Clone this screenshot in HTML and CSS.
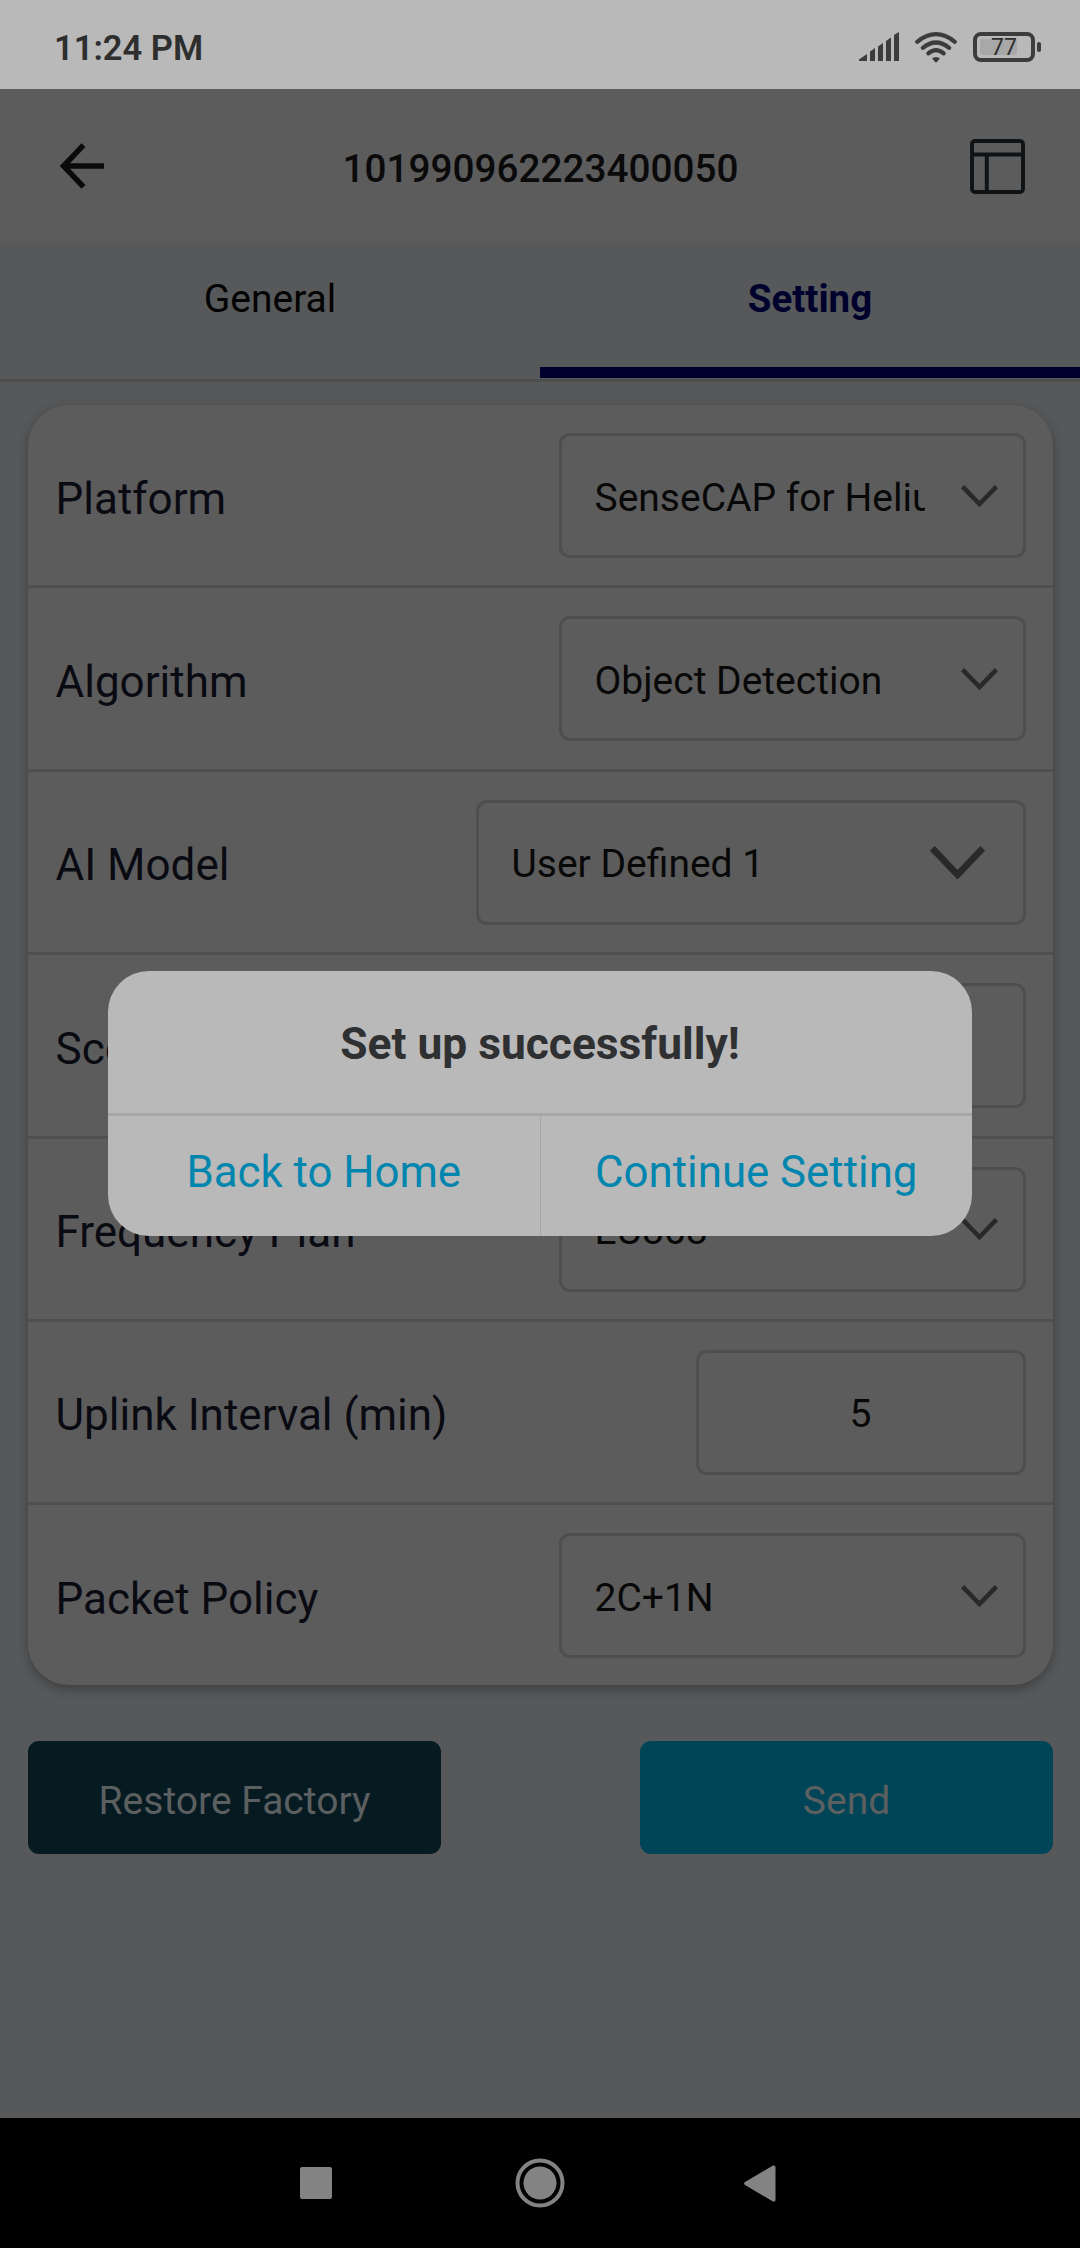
FILE: index.html
```html
<!DOCTYPE html>
<html lang="en">
<head>
<meta charset="utf-8">
<title>Device settings</title>
<link rel="stylesheet" href="styles.css">
</head>
<body>
<div class="screen">
  <div class="status-bar">
    <span class="clock">11:24 PM</span>
    <div class="status-icons">
      <svg class="signal" width="40" height="30" viewBox="0 0 40 30"><path d="M0 29V27.500L8 22V29ZM11 29V19.500L16 16V29ZM19 29V14.500L24 11V29ZM27 29V9L32 5.500V29ZM35 29V3L40 0V29Z"/></svg>
      <svg class="wifi" width="42" height="31" viewBox="0 0 42 31"><g fill="none" stroke-width="4.200" stroke-linecap="round"><path d="M2.200 9.800Q21 -5.400 39.800 9.800"/><path d="M7.800 15.800Q21 5.200 34.200 15.800"/><path d="M13.300 21.400Q21 15 28.700 21.400"/></g><path class="dot" d="M17 26.500Q21 23.300 25 26.500L22 30Q21 30.800 20 30Z"/></svg>
      <div class="battery"><span class="battery-case"><span class="battery-level">77</span></span><span class="battery-nub"></span></div>
    </div>
  </div>
  <header class="app-header">
    <svg width="44" height="46" viewBox="0 0 44 46"><path d="M23.500 2.200L3.500 23L23.500 43.800M4 23H44" fill="none" stroke="#0a0a0a" stroke-width="5.500"/></svg>
    <h1>101990962223400050</h1>
    <svg width="55" height="55" viewBox="0 0 55 55"><g fill="none" stroke="#0f1315" stroke-width="3.900"><rect x="2" y="2" width="51" height="51" rx="3"/><path d="M2 15.500H53M16.800 15.500V53"/></g></svg>
  </header>
  <nav class="tabs">
    <span class="tab">General</span>
    <span class="tab active">Setting</span>
  </nav>
  <main>
    <section class="card">
      <div class="row"><label>Platform</label><div class="field"><span class="value">SenseCAP for Helium</span><svg class="chevron" width="37" height="22" viewBox="0 0 37 22"><path d="M1.600 1.600L18.500 19L35.400 1.600"/></svg></div></div>
      <div class="row"><label>Algorithm</label><div class="field"><span class="value">Object Detection</span><svg class="chevron" width="37" height="22" viewBox="0 0 37 22"><path d="M1.600 1.600L18.500 19L35.400 1.600"/></svg></div></div>
      <div class="row"><label>AI Model</label><div class="field wide"><span class="value">User Defined 1</span><svg class="chevron large" width="55" height="33" viewBox="0 0 55 33"><path d="M2.300 2.300L27.500 28.800L52.700 2.300"/></svg></div></div>
      <div class="row"><label>Score Threshold</label><div class="field number"></div></div>
      <div class="row"><label>Frequency Plan</label><div class="field"><span class="value">EU868</span><svg class="chevron" width="37" height="22" viewBox="0 0 37 22"><path d="M1.600 1.600L18.500 19L35.400 1.600"/></svg></div></div>
      <div class="row"><label>Uplink Interval (min)</label><div class="field number"><span>5</span></div></div>
      <div class="row"><label>Packet Policy</label><div class="field"><span class="value">2C+1N</span><svg class="chevron" width="37" height="22" viewBox="0 0 37 22"><path d="M1.600 1.600L18.500 19L35.400 1.600"/></svg></div></div>
    </section>
    <div class="actions">
      <button class="restore">Restore Factory</button>
      <button class="send">Send</button>
    </div>
  </main>
  <footer class="nav-bar">
    <svg width="32" height="32" viewBox="0 0 32 32"><rect width="32" height="32" rx="2"/></svg>
    <svg width="50" height="50" viewBox="0 0 50 50"><circle cx="25" cy="25" r="22.500" fill="none" stroke="#838383" stroke-width="4"/><circle cx="25" cy="25" r="16.500"/></svg>
    <svg width="32" height="37" viewBox="0 0 32 37"><path d="M1 17L29 .500Q31.500 0 31.500 2V35Q31.500 37 29 36.500L1 20Q-1 18.500 1 17Z"/></svg>
  </footer>
  <div class="dialog">
    <h2>Set up successfully!</h2>
    <div class="choices">
      <button>Back to Home</button>
      <button>Continue Setting</button>
    </div>
  </div>
</div>
</body>
</html>
```
FILE: styles.css
```css
* { box-sizing: border-box; }
body { margin: 0; font-family: Roboto, "Noto Sans", sans-serif; font-size: 39px; }
h1, h2 { margin: 0; font-size: inherit; }
svg { display: block; flex: none; }
button { margin: 0; padding: 0; border: 0; background: none; font: inherit; color: inherit; }

.screen { position: relative; display: flex; flex-direction: column; width: 1080px; height: 2248px; background: #56585a; overflow: hidden; }

.status-bar { flex: none; display: flex; justify-content: space-between; height: 89px; padding: 0 39px 0 54px; background: #b9b9b9; }
.clock { padding-top: 28px; font-size: 34.5px; line-height: 40px; font-weight: 600; color: #2e2e2e; }
.status-icons { display: flex; align-items: flex-start; gap: 16px; padding-top: 32px; fill: #3c3c3c; }
.wifi g { stroke: #3c3c3c; }
.battery { display: flex; align-items: center; gap: 2px; }
.battery-case { display: flex; align-items: center; width: 62px; height: 30px; padding-left: 3px; border: 4px solid #3c3c3c; border-radius: 8px; }
.battery-level { width: 37px; height: 16px; padding-left: 11px; border-radius: 3px; background: #a8a8a8; color: #2e2e2e; font-size: 23px; line-height: 18px; }
.battery-nub { width: 4px; height: 10px; border-radius: 2px; background: #3c3c3c; }

.app-header { flex: none; display: grid; grid-template-columns: 55px 1fr 55px; align-items: center; height: 154px; padding: 0 55px 0 60px; background: #5c5c5c; color: #0a0a0a; }
.app-header h1 { padding: 5px 4px 0 0; font-size: 38.7px; font-weight: 500; text-align: center; }

.tabs { flex: none; display: flex; height: 139px; border-bottom: 3px solid #4e4e4e; }
.tab { flex: 1; padding-top: 34px; line-height: 45px; text-align: center; color: #030303; }
.tab.active { padding-top: 33px; border-bottom: 11px solid #00002d; font-size: 38.5px; font-weight: 700; color: #00002d; margin-bottom: 1px; }

main { flex: 1; padding: 23px 27px 0 28px; }
.card { height: 1280px; border-radius: 41px; background: #5c5c5c; box-shadow: 0 4px 11px rgba(0, 0, 0, .3); }
.row { display: flex; align-items: flex-start; justify-content: space-between; height: 183.4px; padding: 28px 27.5px 0 27.5px; border-bottom: 3px solid #4f4f4f; }
.row:last-child { border-bottom: 0; }
.row label { padding-top: 39.5px; font-size: 44px; line-height: 52px; color: #090a12; }
.field { display: flex; align-items: center; justify-content: space-between; width: 467px; height: 125px; padding: 0 25px 0 33px; border: 3px solid #4e4e4e; border-radius: 11px; color: #080808; }
.field.wide { width: 550px; padding-right: 38px; }
.field.number { width: 330px; padding: 4px 0 0; justify-content: center; }
.value { width: 330px; padding-top: 4px; overflow: hidden; white-space: nowrap; }
.chevron { fill: none; stroke: #292929; stroke-width: 4.5px; }
.chevron.large { stroke-width: 6.6px; }

.actions { display: flex; justify-content: space-between; margin-top: 56px; }
.actions button { width: 413px; height: 113px; padding-top: 7px; border-radius: 11px; color: #5c5f60; }
.restore { background: #061a22; }
.send { background: #004557; }

.nav-bar { flex: none; display: flex; align-items: center; justify-content: space-between; height: 130px; padding: 0 304px 0 300px; background: #000; fill: #838383; }
.nav-bar svg:nth-child(2) { margin-left: 4px; }

.dialog { position: absolute; left: 108px; top: 971px; width: 864px; height: 265px; border-radius: 41px; overflow: hidden; background: #b9b9b9; font-size: 43.8px; text-align: center; }
.dialog h2 { height: 145px; padding-top: 47px; border-bottom: 3px solid #a6a6a6; font-size: 44.3px; line-height: 52px; font-weight: 700; color: #2f3032; }
.choices { display: flex; height: 120px; }
.choices button { flex: 1; padding-bottom: 9px; color: #0086ae; }
.choices button + button { border-left: 1px solid #a6a6a6; }
```
